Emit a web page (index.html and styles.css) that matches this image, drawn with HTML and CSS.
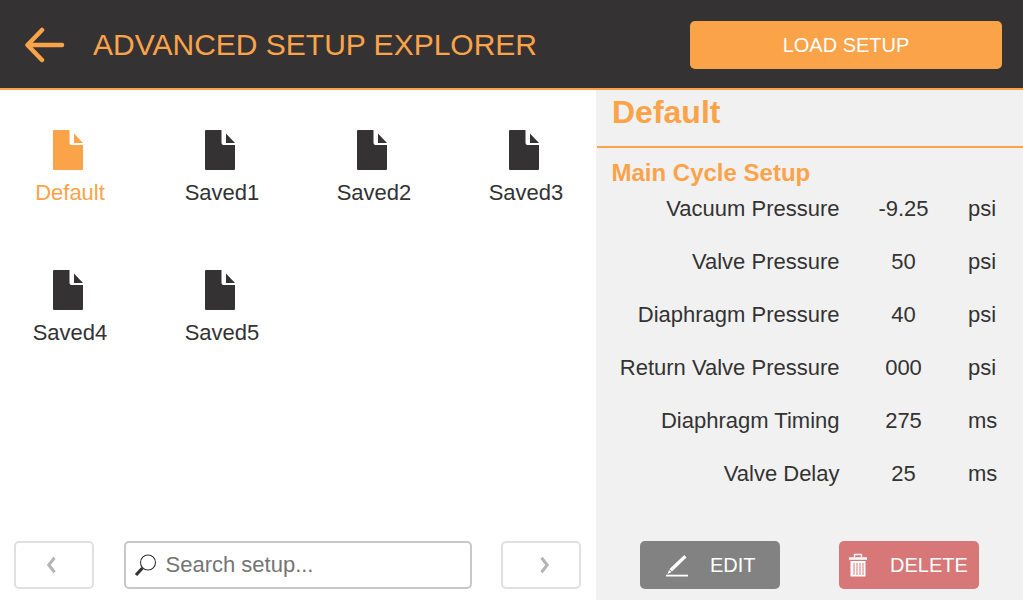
FILE: index.html
```html
<!DOCTYPE html>
<html lang="en">
<head>
<meta charset="utf-8">
<title>Advanced Setup Explorer</title>
<link rel="stylesheet" href="styles.css">
</head>
<body>
<div class="app">
  <header class="topbar">
    <svg class="back" width="42" height="36" viewBox="0 0 42 36"><path d="M18 3 3.500 18 18 33M4 18H38" fill="none" stroke="#fba349" stroke-width="4.500" stroke-linecap="round" stroke-linejoin="round"/></svg>
    <h1 class="title">ADVANCED SETUP EXPLORER</h1>
    <button class="load">LOAD SETUP</button>
  </header>
  <main class="content">
    <section class="explorer">
      <div class="files">
        <div class="file active"><svg class="doc" width="30" height="40" viewBox="0 0 30 40"><path class="body" d="M1 0H16.500V13a2 2 0 0 0 2 2H30V39a1 1 0 0 1-1 1H1a1 1 0 0 1-1-1V1a1 1 0 0 1 1-1Z"/><path class="body" d="M21 3.500 30 13H21Z"/></svg><span>Default</span></div>
        <div class="file"><svg class="doc" width="30" height="40" viewBox="0 0 30 40"><path class="body" d="M1 0H16.500V13a2 2 0 0 0 2 2H30V39a1 1 0 0 1-1 1H1a1 1 0 0 1-1-1V1a1 1 0 0 1 1-1Z"/><path class="body" d="M21 3.500 30 13H21Z"/></svg><span>Saved1</span></div>
        <div class="file"><svg class="doc" width="30" height="40" viewBox="0 0 30 40"><path class="body" d="M1 0H16.500V13a2 2 0 0 0 2 2H30V39a1 1 0 0 1-1 1H1a1 1 0 0 1-1-1V1a1 1 0 0 1 1-1Z"/><path class="body" d="M21 3.500 30 13H21Z"/></svg><span>Saved2</span></div>
        <div class="file"><svg class="doc" width="30" height="40" viewBox="0 0 30 40"><path class="body" d="M1 0H16.500V13a2 2 0 0 0 2 2H30V39a1 1 0 0 1-1 1H1a1 1 0 0 1-1-1V1a1 1 0 0 1 1-1Z"/><path class="body" d="M21 3.500 30 13H21Z"/></svg><span>Saved3</span></div>
        <div class="file"><svg class="doc" width="30" height="40" viewBox="0 0 30 40"><path class="body" d="M1 0H16.500V13a2 2 0 0 0 2 2H30V39a1 1 0 0 1-1 1H1a1 1 0 0 1-1-1V1a1 1 0 0 1 1-1Z"/><path class="body" d="M21 3.500 30 13H21Z"/></svg><span>Saved4</span></div>
        <div class="file"><svg class="doc" width="30" height="40" viewBox="0 0 30 40"><path class="body" d="M1 0H16.500V13a2 2 0 0 0 2 2H30V39a1 1 0 0 1-1 1H1a1 1 0 0 1-1-1V1a1 1 0 0 1 1-1Z"/><path class="body" d="M21 3.500 30 13H21Z"/></svg><span>Saved5</span></div>
      </div>
      <div class="pager">
        <button class="page prev"><svg width="12" height="18" viewBox="0 0 12 18"><path d="M9.500 1.800 3.800 9l5.700 7.200" fill="none" stroke="#b4b4b4" stroke-width="3"/></svg></button>
        <label class="search">
          <svg width="24" height="24" viewBox="0 0 24 24"><circle cx="15" cy="9.500" r="7.500" fill="none" stroke="#333" stroke-width="1.100"/><path d="M9.500 15 3 22" stroke="#333" stroke-width="3.200"/></svg>
          <input type="text" placeholder="Search setup...">
        </label>
        <button class="page next"><svg width="12" height="18" viewBox="0 0 12 18"><path d="M2.500 1.800 8.200 9l-5.700 7.200" fill="none" stroke="#b4b4b4" stroke-width="3"/></svg></button>
      </div>
    </section>
    <aside class="details">
      <h2 class="name">Default</h2>
      <h3 class="section">Main Cycle Setup</h3>
      <div class="params">
        <div class="row"><span class="label">Vacuum Pressure</span><span class="value">-9.25</span><span class="unit">psi</span></div>
        <div class="row"><span class="label">Valve Pressure</span><span class="value">50</span><span class="unit">psi</span></div>
        <div class="row"><span class="label">Diaphragm Pressure</span><span class="value">40</span><span class="unit">psi</span></div>
        <div class="row"><span class="label">Return Valve Pressure</span><span class="value">000</span><span class="unit">psi</span></div>
        <div class="row"><span class="label">Diaphragm Timing</span><span class="value">275</span><span class="unit">ms</span></div>
        <div class="row"><span class="label">Valve Delay</span><span class="value">25</span><span class="unit">ms</span></div>
      </div>
      <div class="actions">
        <button class="action edit"><svg width="24" height="24" viewBox="0 0 24 24"><path d="M18.300 2 20.500 4.500 6 18.500 3.500 16Z" fill="#fff"/><path d="M3 17 5.500 19 1.500 21Z" fill="#fff"/><path d="M0 22.600H22" stroke="#fff" stroke-width="1.800"/></svg><span>EDIT</span></button>
        <button class="action delete"><svg width="18" height="24" viewBox="0 0 18 24"><path d="M0 5.500H18" stroke="#fff" stroke-width="2.500"/><path d="M5.500 4V1.500H12.500V4" fill="none" stroke="#fff" stroke-width="1.300"/><path d="M1.500 8H16.500V23.500H1.500Z" fill="#fff"/><path d="M5 10V22M8 10V22M11 10V22M14 10V22" stroke="#d87777" stroke-width="1"/></svg><span>DELETE</span></button>
      </div>
    </aside>
  </main>
</div>
</body>
</html>
```
FILE: styles.css
```css
* { box-sizing: border-box; }
html, body { margin: 0; padding: 0; }
body { font-family: "Liberation Sans", Arial, sans-serif; color: #333; background: #fff; overflow: hidden; }
button { font-family: inherit; cursor: pointer; }
.app { width: 1023px; height: 600px; display: flex; flex-direction: column; }

.topbar { height: 90px; flex: none; background: #353233; border-bottom: 2px solid #fba349; display: flex; align-items: center; padding: 2px 21px 0 24px; }
.back { flex: none; display: block; }
.title { margin: 0 0 0 27px; font-size: 30px; font-weight: 400; color: #fba349; flex: 1; letter-spacing: 0; }
.load { width: 312px; height: 48px; background: #fba349; color: #fff; border: 0; border-radius: 5px; font-size: 20px; }

.content { flex: 1; display: flex; min-height: 0; }
.explorer { width: 596px; flex: none; display: flex; flex-direction: column; justify-content: space-between; padding: 40px 0 11px; }
.files { display: grid; grid-template-columns: repeat(4, 152px); grid-auto-rows: 140px; margin-left: -6px; }
.file { display: flex; flex-direction: column; align-items: center; font-size: 22px; color: #333; }
.file span { margin-top: 10px; line-height: 26px; }
.doc { display: block; margin-right: 4px; }
.doc .body { fill: #353233; }
.file.active { color: #fba349; }
.file.active .body { fill: #fba349; }

.pager { display: flex; align-items: center; padding: 0 15px 0 14px; justify-content: space-between; }
.page { width: 80px; height: 48px; background: #fff; border: 2px solid #e0e0e0; border-radius: 5px; padding: 0; display: flex; align-items: center; justify-content: center; }
.page svg { display: block; }
.prev svg { margin-right: 6px; }
.next svg { margin-left: 7px; }
.search { width: 348px; height: 48px; border: 2px solid #c8c8c8; border-radius: 5px; display: flex; align-items: center; padding-left: 7px; gap: 9px; background: #fff; }
.search svg { flex: none; }
.search input { border: 0; outline: 0; flex: 1; min-width: 0; font: 22px "Liberation Sans", Arial, sans-serif; color: #333; background: transparent; padding: 0; }
.search input::placeholder { color: #757575; opacity: 1; }

.details { flex: 1; background: #f1f1f1; display: flex; flex-direction: column; min-width: 0; }
.name { margin: 0 0 0 1px; padding-left: 15px; height: 58px; border-bottom: 2px solid #fba349; color: #fba349; font-size: 32px; font-weight: 700; line-height: 44px; }
.section { margin: 10px 0 0; padding-left: 15.500px; color: #fba349; font-size: 24px; font-weight: 700; line-height: 30px; }
.params { margin-top: 6px; display: flex; flex-direction: column; }
.row { height: 53px; display: flex; align-items: flex-start; font-size: 22px; line-height: 30px; }
.label { width: 243.500px; text-align: right; }
.value { width: 64px; margin-left: 32px; text-align: center; }
.unit { margin-left: 32.500px; }
.actions { margin-top: auto; margin-bottom: 11px; display: flex; padding-left: 44px; gap: 59px; }
.action { width: 140px; height: 48px; border: 0; border-radius: 5px; color: #fff; font-size: 20px; display: flex; align-items: center; padding: 0; }
.action svg { flex: none; }
.edit { background: #828282; padding-left: 26px; gap: 20px; }
.delete { background: #d87777; padding-left: 10px; gap: 23px; }
```
